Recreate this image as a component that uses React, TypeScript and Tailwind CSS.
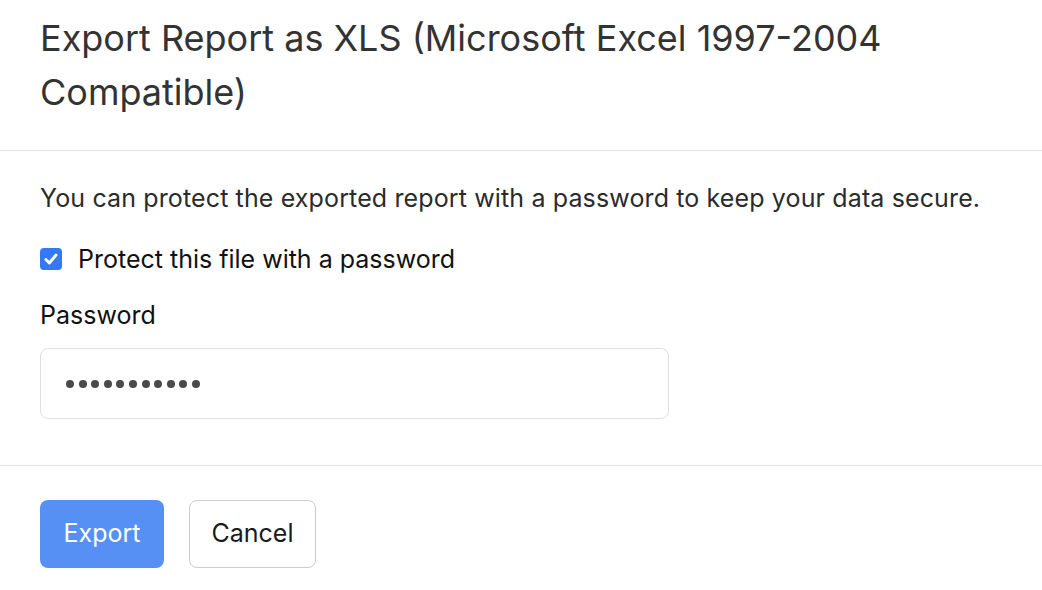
export default function App() {
  const dots = Array.from({ length: 11 });
  return (
    <div className="w-[1042px] h-[590px] bg-white text-[#333] font-['Inter','Noto_Sans',sans-serif] overflow-hidden">
      {/* Header */}
      <div className="h-[151px] border-b border-[#e2e2e6] px-10 pt-[11px]">
        <h1 className="text-[36px] leading-[54px] font-normal text-[#333] max-w-[900px]">
          Export Report as XLS (Microsoft Excel 1997-2004 Compatible)
        </h1>
      </div>

      {/* Body */}
      <div className="h-[315px] border-b border-[#e2e2e6] px-10 pt-[32px]">
        <p className="text-[25px] leading-[30px] tracking-[0.13px] text-[#2b2b2b]">
          You can protect the exported report with a password to keep your data secure.
        </p>
        <label className="mt-[31px] flex items-center gap-[16px] text-[25px] leading-[30px] text-[#111]">
          <span className="w-[22px] h-[22px] rounded-[4px] bg-[#3478f6] flex items-center justify-center">
            <svg viewBox="0 0 16 16" className="w-[18px] h-[18px]" fill="none" stroke="white" strokeWidth="2.6" strokeLinecap="round" strokeLinejoin="round">
              <path d="M3.5 8.5l3 3 6-7" />
            </svg>
          </span>
          Protect this file with a password
        </label>
        <div className="mt-[26px] text-[25px] leading-[30px] text-[#111]">Password</div>
        <div className="mt-[18px] w-[629px] h-[71px] rounded-[8px] border border-[#e0e0e0] flex items-center gap-[4.6px] pl-[25px]">
          {dots.map((_, i) => (
            <span key={i} className="w-[8px] h-[8px] rounded-full bg-[#4a4a4a]" />
          ))}
        </div>
      </div>

      {/* Footer */}
      <div className="px-10 pt-[34px] flex gap-[25px]">
        <button className="h-[68px] w-[124px] rounded-[8px] bg-[#5790f5] text-white text-[25px]">Export</button>
        <button className="h-[68px] w-[127px] rounded-[8px] border border-[#cccccc] bg-white text-[#1a1a1a] text-[25px]">Cancel</button>
      </div>
    </div>
  );
}
